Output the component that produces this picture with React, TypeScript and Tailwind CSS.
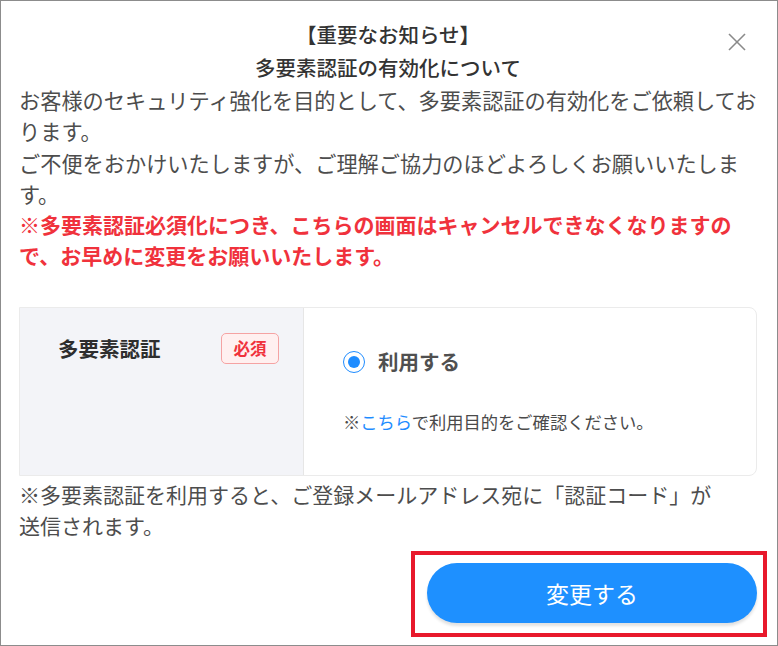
export default function App() {
  return (
    <div className="w-[778px] h-[646px] bg-white border border-[#8c8c8c] relative text-[#4d4d4d] font-['Noto_Sans_CJK_JP','Noto_Sans',sans-serif] overflow-hidden">
      <button className="absolute left-[726px] top-[31px] w-[20px] h-[20px]" aria-label="close">
        <svg width="20" height="20" viewBox="0 0 20 20">
          <line x1="2" y1="2" x2="18" y2="18" stroke="#8a8a8a" strokeWidth="1.6" />
          <line x1="18" y1="2" x2="2" y2="18" stroke="#8a8a8a" strokeWidth="1.6" />
        </svg>
      </button>
      <div className="pl-[18px] pr-[20px] pt-[17px]">
        <div className="text-center text-[20.5px] leading-[33px] font-medium text-[#333333]">
          <p>【重要なお知らせ】</p>
          <p>多要素認証の有効化について</p>
        </div>
        <div className="text-[21.2px] leading-[31.3px] whitespace-nowrap">
          <p>
            お客様のセキュリティ強化を目的として、多要素認証の有効化をご依頼してお
            <br />
            ります。
          </p>
          <p>
            ご不便をおかけいたしますが、ご理解ご協力のほどよろしくお願いいたしま
            <br />
            す。
          </p>
          <p className="text-[#f0323c] font-semibold text-[21px]">
            ※多要素認証必須化につき、こちらの画面はキャンセルできなくなりますの
            <br />
            で、お早めに変更をお願いいたします。
          </p>
        </div>
        <div className="mt-[35px] h-[169px] flex border border-[#ebebeb] rounded-r-[8px] overflow-hidden">
          <div className="w-[284px] bg-[#f3f4f8] border-r border-[#e6e6e6] flex items-start justify-between pl-[38px] pr-[24px] pt-[25px]">
            <span className="text-[20.5px] leading-[30px] font-bold text-[#2e2e2e]">多要素認証</span>
            <span className="w-[58px] h-[31px] rounded-[5px] border border-[#f5a3a3] bg-[#fff0f0] text-[#f0323c] font-bold text-[16.5px] flex items-center justify-center">
              必須
            </span>
          </div>
          <div className="flex-1 pl-[39px] pt-[39px]">
            <div className="flex items-center h-[30px]">
              <span className="w-[22px] h-[22px] rounded-full border-[1.5px] border-[#1e8cff] flex items-center justify-center">
                <span className="w-[12px] h-[12px] rounded-full bg-[#1e8cff]" />
              </span>
              <span className="ml-[13px] text-[20.5px] font-bold text-[#505050]">利用する</span>
            </div>
            <p className="mt-[32px] text-[17.3px] leading-[26px] text-[#4a4a4a]">
              ※<span className="text-[#1e8cff]">こちら</span>で利用目的をご確認ください。
            </p>
          </div>
        </div>
        <div className="mt-[3px] text-[21px] leading-[31.3px] whitespace-nowrap">
          <p>
            ※多要素認証を利用すると、ご登録メールアドレス宛に「認証コード」が
            <br />
            送信されます。
          </p>
        </div>
        <div className="flex justify-end mt-[10px] -mr-[10px]">
          <div className="w-[356px] h-[86px] border-4 border-[#e8192c] pl-[12px] pt-[8px]">
            <button className="w-[330px] h-[60px] rounded-full bg-[#1e90ff] text-white text-[23px] shadow-[0_3px_3px_rgba(0,0,0,0.12)] flex items-center justify-center">
              変更する
            </button>
          </div>
        </div>
      </div>
    </div>
  );
}
